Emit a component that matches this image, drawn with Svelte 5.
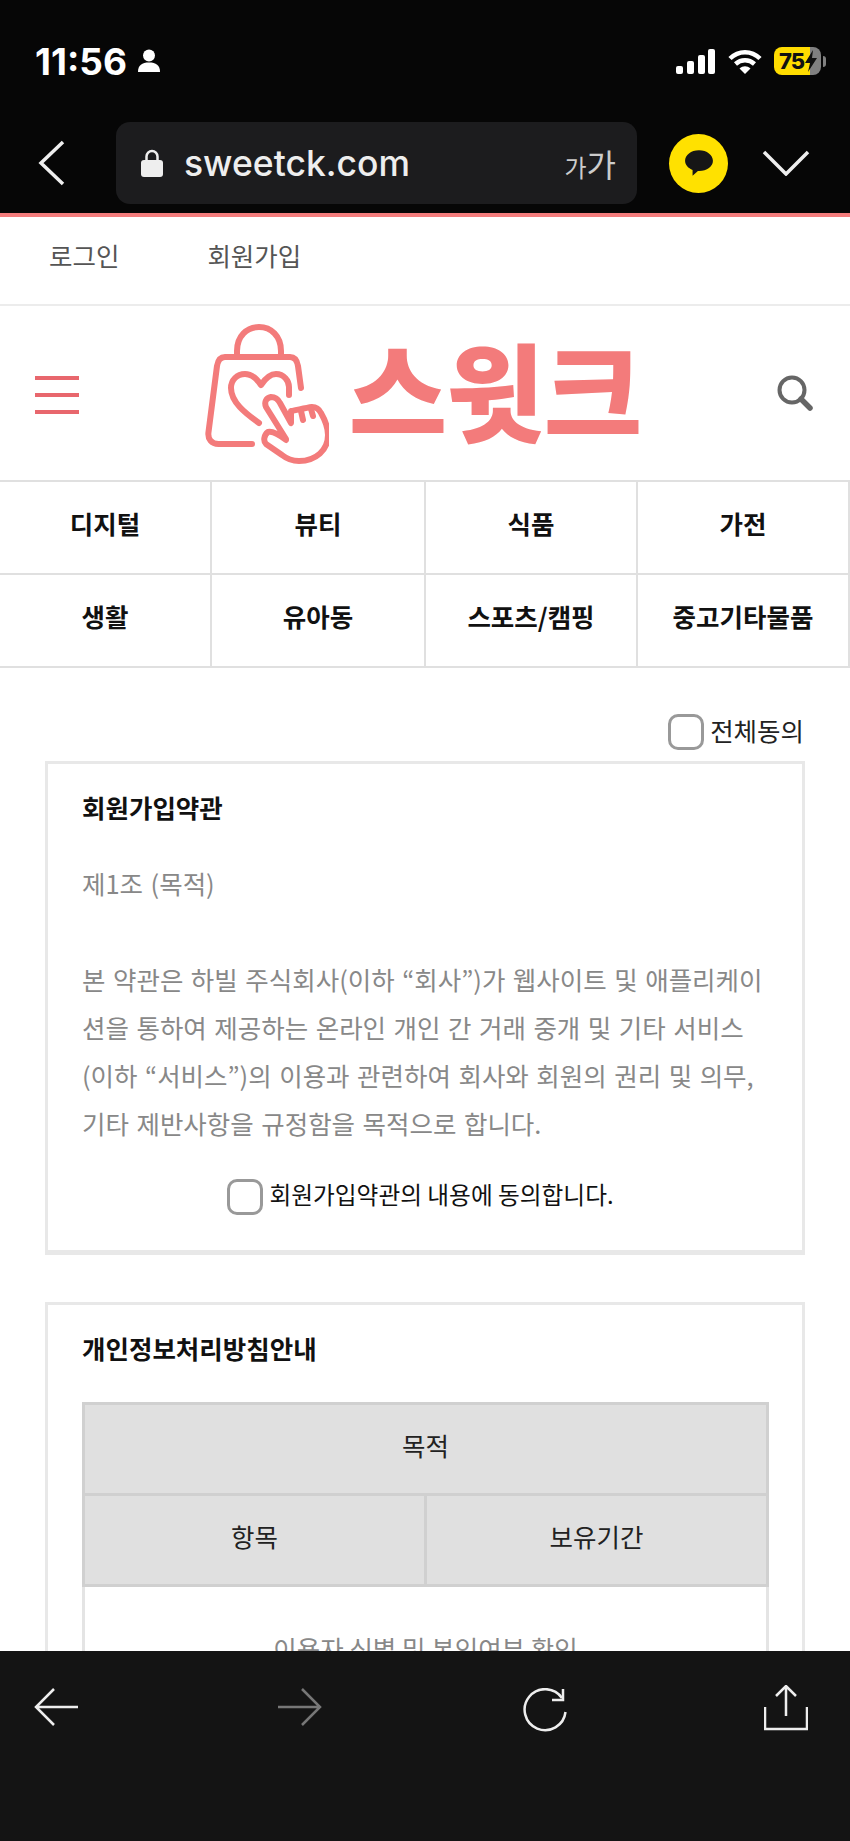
<script lang="ts">
  const categories = ['디지털', '뷰티', '식품', '가전', '생활', '유아동', '스포츠/캠핑', '중고기타물품'];
</script>

<div class="phone">
  <header class="chrome">
    <div class="status">
      <div class="status-left">
        <span class="time">11:56</span>
        <svg class="person" viewBox="0 0 24 24" width="24" height="24">
          <circle cx="12" cy="6.500" r="6" fill="#fff" />
          <path d="M1 23c0-7 4-9.500 11-9.500s11 2.500 11 9.500z" fill="#fff" />
        </svg>
      </div>
      <div class="status-right">
        <svg viewBox="0 0 39 25" width="39" height="25">
          <rect x="0" y="17" width="7" height="8" rx="2" fill="#fff" />
          <rect x="11" y="12" width="7" height="13" rx="2" fill="#fff" />
          <rect x="22" y="6" width="7" height="19" rx="2" fill="#fff" />
          <rect x="32" y="0" width="7" height="25" rx="2" fill="#fff" />
        </svg>
        <svg class="wifi" viewBox="0 0 34 25" width="34" height="25">
          <path d="M2 9.500C10.500 1 23.500 1 32 9.500M7.500 15c5.500-5 13.500-5 19 0" fill="none" stroke="#fff" stroke-width="4.500" />
          <path d="M11.500 19.500c3.500-3 7.500-3 11 0L17 25z" fill="#fff" />
        </svg>
        <div class="battery">
          <span class="battery-level">75</span>
          <svg class="bolt" viewBox="0 0 12 22" width="12" height="22">
            <path d="M8 0 0 13h5l-2 9 9-14H7z" fill="#111" />
          </svg>
        </div>
        <span class="battery-nub"></span>
      </div>
    </div>
    <div class="addressrow">
      <svg class="back" viewBox="0 0 28 46" width="28" height="46">
        <path d="M25 2 3 23l22 21" fill="none" stroke="#eee" stroke-width="3.500" />
      </svg>
      <div class="address">
        <svg viewBox="0 0 22 28" width="22" height="28">
          <path d="M5.500 12V7.500a5.500 5.500 0 0 1 11 0V12" fill="none" stroke="#eee" stroke-width="2.500" />
          <rect x="0" y="11" width="22" height="17" rx="3" fill="#eee" />
        </svg>
        <span class="url">sweetck.com</span>
        <span class="textsize"><small>가</small>가</span>
      </div>
      <div class="kakao">
        <svg viewBox="0 0 28 28" width="30" height="30">
          <path d="M14 2C6.500 2 1 6.500 1 12c0 4 3 7 7 8.500L8 26l5-4.500h1c7.500 0 13-4 13-9.500S21.500 2 14 2z" fill="#161616" />
        </svg>
      </div>
      <svg class="down" viewBox="0 0 48 26" width="48" height="26">
        <path d="M2 2l22 22L46 2" fill="none" stroke="#eee" stroke-width="3.500" />
      </svg>
    </div>
  </header>

  <main class="page">
    <nav class="toplinks">
      <a href="#login">로그인</a>
      <a href="#join">회원가입</a>
    </nav>

    <div class="brand">
      <div class="burger"><span></span><span></span><span></span></div>
      <div class="logo">
        <svg viewBox="0 0 124 140" width="124" height="140">
          <g fill="none" stroke="#f37b7b" stroke-width="6" stroke-linecap="round" stroke-linejoin="round">
            <path d="M32 31V27C32 12 42 3 54 3s22 9 22 24v4" />
            <path d="M96 64 93 42c-1-6-4-9-8-9H20c-4 0-7 3-8 9L3.500 108c-1 7 3 12 10 12H47" />
            <path d="M54 99C40 89 26 78 26 64c0-8 6-14 14-14 7 0 12 5 16 11 4-6 9-11 15-11 8 0 13 7 13 13v8" />
            <path d="M81 115 61 83c-2-5 0-9 5-10 4 0 7 2 9 6l11 20V87c6-1 14-3 21-4 4 0 7 2 9 6 4 7 7 14 7 22 0 15-12 26-29 26-7 0-12-2-17-6l-16-11c-3-3-2-9 2-12 4-1 9 1 18 8z" />
            <path d="M96 87l2 9M106 85l2 7" />
          </g>
        </svg>
        <span class="wordmark">스윗크</span>
      </div>
      <svg class="search" viewBox="0 0 36 36" width="36" height="36">
        <circle cx="15" cy="15" r="12.500" fill="none" stroke="#666" stroke-width="4" />
        <path d="M24 24l9 9" stroke="#666" stroke-width="5.500" stroke-linecap="round" />
      </svg>
    </div>

    <div class="categories">
      {#each categories as name}
        <a class="category" href="#cat">{name}</a>
      {/each}
    </div>

    <label class="agree-all">
      <input type="checkbox" />
      <span>전체동의</span>
    </label>

    <section class="card">
      <h2>회원가입약관</h2>
      <p class="terms">제1조 (목적)<br /><br />본 약관은 하빌 주식회사(이하 “회사”)가 웹사이트 및 애플리케이션을 통하여 제공하는 온라인 개인 간 거래 중개 및 기타 서비스(이하 “서비스”)의 이용과 관련하여 회사와 회원의 권리 및 의무, 기타 제반사항을 규정함을 목적으로 합니다.</p>
      <label class="agree">
        <input type="checkbox" />
        <span>회원가입약관의 내용에 동의합니다.</span>
      </label>
    </section>

    <section class="card second">
      <h2>개인정보처리방침안내</h2>
      <table>
        <thead>
          <tr><th colspan="2">목적</th></tr>
          <tr><th>항목</th><th>보유기간</th></tr>
        </thead>
        <tbody>
          <tr><td colspan="2">이용자 식별 및 본인여부 확인</td></tr>
        </tbody>
      </table>
    </section>
  </main>

  <footer class="toolbar">
    <svg viewBox="0 0 44 38" width="44" height="38">
      <path d="M44 19H2M20 1 2 19l18 18" fill="none" stroke="#eee" stroke-width="2.500" />
    </svg>
    <svg class="nudge" viewBox="0 0 44 38" width="44" height="38">
      <path d="M0 19h42M24 1l18 18-18 18" fill="none" stroke="#777" stroke-width="2.500" />
    </svg>
    <svg class="nudge" viewBox="0 0 46 46" width="46" height="46">
      <path d="M40 10A20.500 20.500 0 1 0 43.500 24" fill="none" stroke="#eee" stroke-width="2.500" />
      <path d="M41 1v11H30" fill="none" stroke="#eee" stroke-width="2.500" />
    </svg>
    <svg class="share" viewBox="0 0 44 46" width="44" height="46">
      <path d="M22 31V2M12 11l10-10 10 10" fill="none" stroke="#eee" stroke-width="2.500" />
      <path d="M1 22v22h42V22" fill="none" stroke="#eee" stroke-width="2.500" />
    </svg>
  </footer>
</div>

<style>
  :global(body) {
    margin: 0;
    background: #fff;
  }

  .phone {
    display: flex;
    flex-direction: column;
    height: 1841px;
    overflow: hidden;
    font-family: "Noto Sans CJK KR", "Noto Sans", sans-serif;
    color: #111;
  }

  .chrome {
    height: 213px;
    flex: none;
    background: #060606;
    border-bottom: 4px solid #f47c7c;
  }

  .status {
    display: flex;
    justify-content: space-between;
    align-items: center;
    height: 26px;
    padding: 48px 24px 0 35px;
  }

  .status-left,
  .status-right {
    display: flex;
    align-items: center;
  }

  .time {
    font-family: Inter, sans-serif;
    font-size: 37px;
    font-weight: 700;
    color: #fff;
  }

  .person {
    margin-left: 10px;
  }

  .wifi {
    margin: 0 12px 0 13px;
  }

  .battery {
    display: flex;
    align-items: center;
    width: 47px;
    height: 28px;
    border-radius: 8px;
    background: linear-gradient(90deg, #ffdc00 77%, #808080 77%);
    overflow: hidden;
  }

  .battery-level {
    margin-left: 5px;
    font-family: Inter, sans-serif;
    font-size: 22px;
    font-weight: 800;
    letter-spacing: -1px;
    color: #111;
  }

  .bolt {
    margin-left: 1px;
  }

  .battery-nub {
    width: 3px;
    height: 11px;
    margin-left: 2px;
    border-radius: 0 3px 3px 0;
    background: #808080;
  }

  .addressrow {
    display: flex;
    align-items: center;
    height: 82px;
    margin-top: 48px;
    padding: 0 39px 0 38px;
  }

  .address {
    display: flex;
    align-items: center;
    width: 521px;
    height: 82px;
    box-sizing: border-box;
    margin-left: 50px;
    padding: 0 21px 0 25px;
    border-radius: 14px;
    background: #1c1c1e;
    color: #eee;
  }

  .url {
    margin-left: 21px;
    font-family: Inter, sans-serif;
    font-size: 35.500px;
    font-weight: 500;
  }

  .textsize {
    margin-left: auto;
    font-size: 32px;
    color: #ccc;
  }

  .textsize small {
    font-size: 24px;
  }

  .kakao {
    display: flex;
    align-items: center;
    justify-content: center;
    width: 59px;
    height: 59px;
    margin-left: 32px;
    border-radius: 50%;
    background: #ffe100;
  }

  .down {
    margin-left: 34px;
  }

  .page {
    flex: 1;
    min-height: 0;
    overflow: hidden;
    background: #fff;
  }

  .toplinks {
    display: flex;
    gap: 88px;
    align-items: center;
    box-sizing: border-box;
    height: 89px;
    padding: 0 0 12px 49px;
    border-bottom: 2px solid #ececec;
  }

  .toplinks a {
    font-size: 25.500px;
    color: #555;
    text-decoration: none;
  }

  .brand {
    display: flex;
    align-items: center;
    justify-content: space-between;
    height: 174px;
    padding: 0 37px 0 35px;
  }

  .burger {
    display: flex;
    flex-direction: column;
    gap: 13px;
    width: 44px;
    margin-top: 4px;
  }

  .burger span {
    height: 4px;
    background: #e8676d;
  }

  .logo {
    display: flex;
    align-items: center;
    gap: 20px;
    margin-top: 2px;
    margin-right: 10px;
  }

  .wordmark {
    padding-bottom: 14px;
    font-size: 107px;
    line-height: 1;
    font-weight: 900;
    color: #f37b7b;
    letter-spacing: -1px;
  }

  .categories {
    display: grid;
    grid-template-columns: 212px 214px 212px 212px;
    grid-auto-rows: 93px;
    border-top: 2px solid #e0e0e0;
  }

  .category {
    display: flex;
    align-items: center;
    justify-content: center;
    padding-bottom: 10px;
    box-sizing: border-box;
    border-right: 2px solid #e0e0e0;
    border-bottom: 2px solid #e0e0e0;
    font-size: 25.500px;
    font-weight: 700;
    color: #111;
    text-decoration: none;
  }

  .agree-all {
    display: flex;
    justify-content: flex-end;
    align-items: center;
    gap: 6px;
    height: 36px;
    margin-top: 46px;
    padding-right: 46px;
    font-size: 25.500px;
    color: #222;
  }

  .agree-all span {
    padding-bottom: 6px;
  }

  input[type="checkbox"] {
    appearance: none;
    width: 36px;
    height: 36px;
    margin: 0;
    box-sizing: border-box;
    border: 3px solid #999;
    border-radius: 10px;
    background: #fff;
  }

  .card {
    box-sizing: border-box;
    width: 760px;
    margin: 11px 0 0 45px;
    padding: 26px 33px 0 34px;
    border: 3px solid #e8e8e8;
    border-bottom-width: 5px;
    height: 494px;
  }

  .card.second {
    height: 500px;
    margin-top: 47px;
    border-bottom-width: 3px;
  }

  h2 {
    margin: 0;
    font-size: 25.500px;
    line-height: 34px;
    font-weight: 700;
    color: #111;
  }

  .terms {
    margin: 35px 0 0;
    font-size: 25.500px;
    line-height: 48px;
    word-spacing: 1.800px;
    color: #888;
    word-break: break-all;
  }

  .agree {
    display: flex;
    justify-content: center;
    align-items: center;
    gap: 6px;
    margin-top: 30px;
    padding-right: 10px;
    font-size: 23.700px;
    color: #111;
  }

  .agree span {
    padding-bottom: 6px;
  }

  table {
    width: 100%;
    margin-top: 37px;
    border-collapse: collapse;
    table-layout: fixed;
  }

  th,
  td {
    height: 91px;
    padding: 0 0 10px;
    box-sizing: border-box;
    border: 3px solid #d0d0d0;
    font-size: 25.500px;
    font-weight: 400;
    text-align: center;
  }

  th {
    background: #e0e0e0;
    color: #222;
  }

  td {
    padding: 42px 0 40px;
    border-color: #e4e4e4;
    color: #888;
  }

  .toolbar {
    display: flex;
    justify-content: space-between;
    align-items: flex-start;
    height: 190px;
    flex: none;
    box-sizing: border-box;
    padding: 37px 42px 0 34px;
    background: #141414;
  }

  .nudge {
    margin-left: 4px;
  }

  .share {
    margin-top: -3px;
  }
</style>
